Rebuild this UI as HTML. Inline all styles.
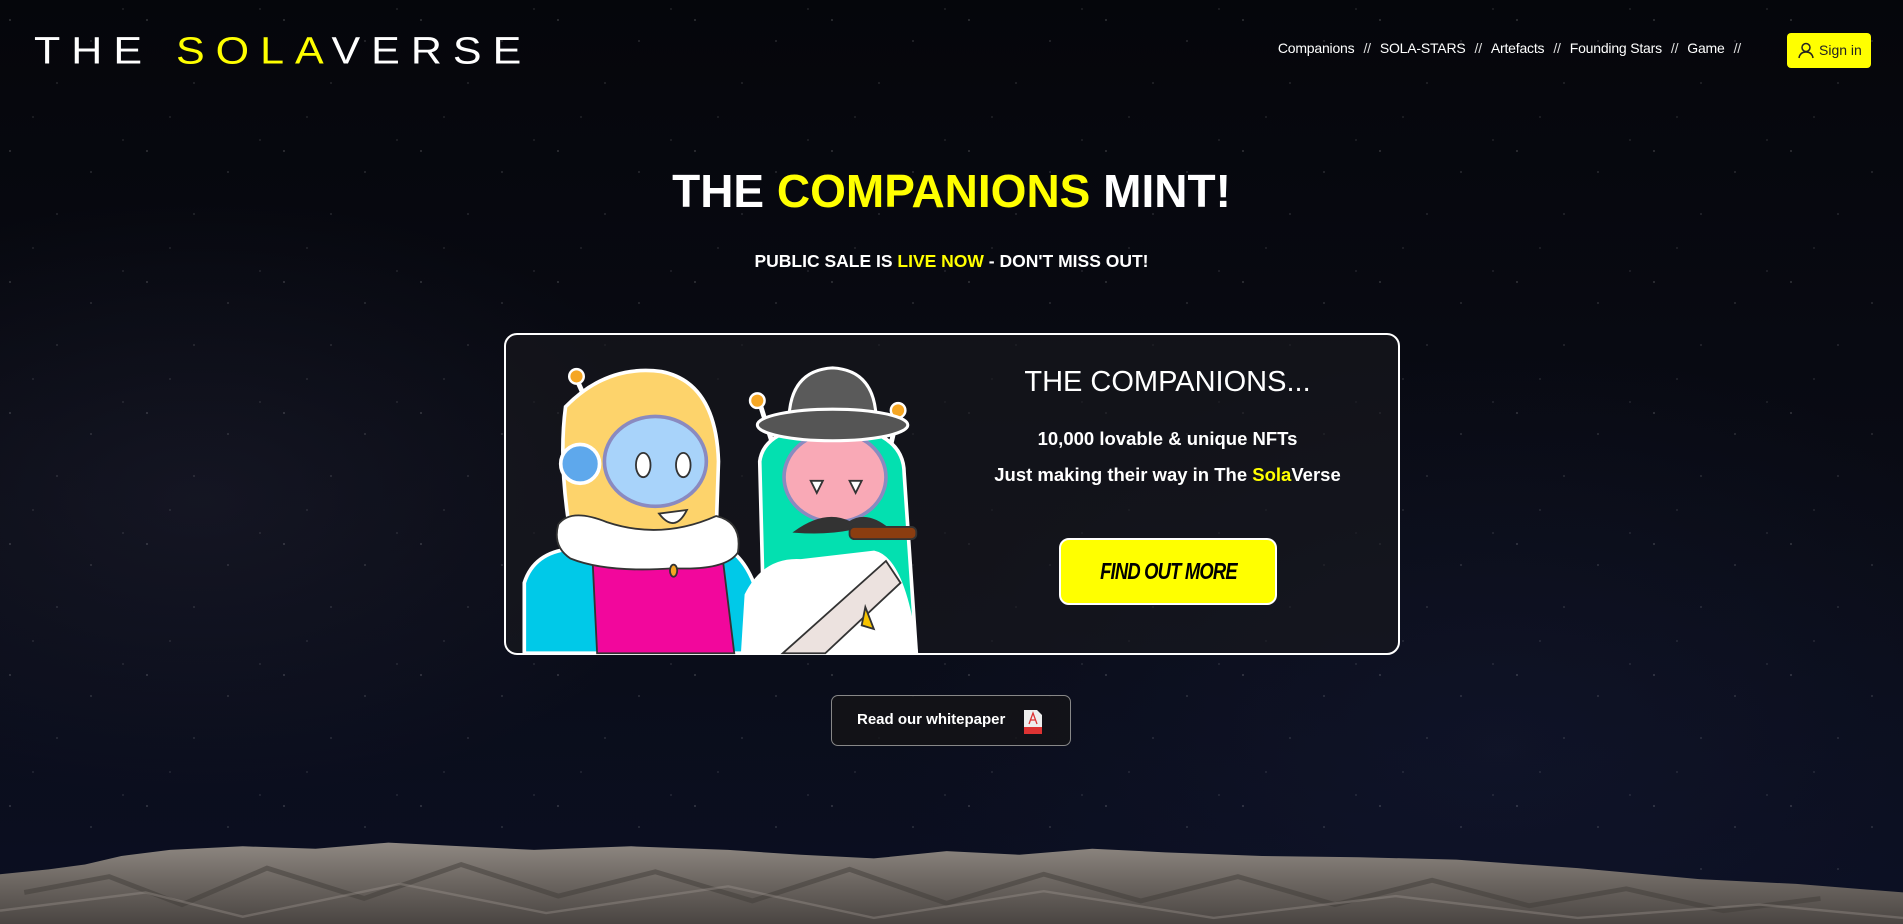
<!DOCTYPE html>
<html><head><meta charset="utf-8"><style>
*{margin:0;padding:0;box-sizing:border-box}
html,body{width:1903px;height:924px;overflow:hidden}
body{position:relative;font-family:"Liberation Sans",sans-serif;color:#fff;
background:
radial-gradient(ellipse 500px 300px at 200px 500px,rgba(40,40,60,.35),transparent),
radial-gradient(ellipse 600px 400px at 1500px 750px,rgba(20,25,50,.5),transparent),
linear-gradient(#05060b,#0a0c16 60%,#0b0f22);}
.stars{position:absolute;inset:0;
background-image:radial-gradient(1px 1px at 10px 20px,rgba(255,255,255,.5),transparent),
radial-gradient(1px 1px at 57px 83px,rgba(255,255,255,.35),transparent),
radial-gradient(1px 1px at 91px 41px,rgba(255,255,255,.4),transparent),
radial-gradient(1px 1px at 33px 117px,rgba(255,255,255,.3),transparent),
radial-gradient(1px 1px at 123px 9px,rgba(255,255,255,.3),transparent);
background-size:137px 131px}
.logo{position:absolute;left:34px;top:26px;font-size:43px;letter-spacing:11px;font-weight:normal;white-space:nowrap;line-height:50px;transform:scaleY(.88)}
.y{color:#ffff00}
.nav{position:absolute;top:40px;right:153px;font-size:14px;white-space:nowrap;letter-spacing:-.2px}
.nav span.s{margin:0 9px;color:#ddd}
.sign{position:absolute;left:1787px;top:33px;width:84px;height:35px;background:#ffff00;border-radius:4px;color:#222;font-size:14px;line-height:35px;padding-left:32px}
.sign svg{position:absolute;left:11px;top:9px}
h1{position:absolute;left:0;width:1903px;top:164px;text-align:center;font-size:46px;font-weight:bold}
.sub{position:absolute;left:0;width:1903px;top:251px;text-align:center;font-size:17.5px;font-weight:bold}
.card{position:absolute;left:504px;top:333px;width:896px;height:322px;border:2px solid #fff;border-radius:13px;background:rgba(25,25,30,.6)}
.ct{position:absolute;left:1000px;width:335px;text-align:center;top:366px;font-size:29px}
.l1{position:absolute;left:960px;width:415px;text-align:center;top:428px;font-size:18.5px;font-weight:bold}
.l2{position:absolute;left:960px;width:415px;text-align:center;top:464px;font-size:18.5px;font-weight:bold}
.btn{position:absolute;left:1059px;top:538px;width:218px;height:67px;background:#ffff00;border:2px solid #fff;border-radius:10px;color:#000;font-size:23px;font-weight:bold;font-style:italic;text-align:center;line-height:63px;letter-spacing:-1px}
.btn span{display:inline-block;transform:scaleX(.8)}
.wp{position:absolute;left:831px;top:695px;width:240px;height:51px;border:1.5px solid #888;border-radius:7px;background:rgba(20,20,22,.8);font-size:15px;font-weight:bold;line-height:48px;padding-left:25px}
.wp svg{position:absolute;left:192px;top:14px}
svg.over{position:absolute;left:0;top:0}
</style></head><body>
<div class="stars"></div>
<svg class="over" width="1903" height="924" viewBox="0 0 1568 761" preserveAspectRatio="none">
<defs><linearGradient id="m" x1="0" y1="0" x2="0" y2="1"><stop offset="0" stop-color="#8f8882"/><stop offset=".5" stop-color="#6b6560"/><stop offset="1" stop-color="#4a4542"/></linearGradient></defs>
<path d="M0 720 L40 716 L70 712 L100 705 L140 700 L200 697 L260 699 L320 694 L380 697 L440 700 L520 697 L600 700 L660 704 L720 707 L780 701 L840 704 L900 699 L960 702 L1040 705 L1120 706 L1200 708 L1300 715 L1400 724 L1480 728 L1568 735 L1568 761 L0 761Z" fill="url(#m)"/>
<path d="M20 735 L90 722 L150 745 L220 715 L300 740 L380 712 L460 738 L540 718 L620 742 L700 716 L780 744 L860 720 L940 742 L1020 722 L1100 745 L1180 725 L1260 746 L1340 732 L1420 750 L1500 740" stroke="#3f3b38" stroke-width="4" fill="none" opacity=".5"/>
<path d="M0 750 L120 735 L200 755 L330 728 L450 752 L600 730 L720 756 L860 734 L1000 756 L1150 738 L1300 756 L1450 745 L1568 756" stroke="#a39b94" stroke-width="2" fill="none" opacity=".35"/>
</svg>
<div class="logo">THE <span class="y">SOLA</span>VERSE</div>
<div class="nav">Companions<span class="s">//</span>SOLA-STARS<span class="s">//</span>Artefacts<span class="s">//</span>Founding Stars<span class="s">//</span>Game<span class="s">//</span></div>
<div class="sign"><svg width="16" height="17" viewBox="0 0 16 17"><circle cx="8" cy="5.5" r="4" fill="none" stroke="#222" stroke-width="1.5"/><path d="M1 16 Q2 10 8 10 Q14 10 15 16" fill="none" stroke="#222" stroke-width="1.5"/></svg>Sign in</div>
<h1>THE <span class="y">COMPANIONS</span> MINT!</h1>
<div class="sub">PUBLIC SALE IS <span class="y">LIVE NOW</span> - DON'T MISS OUT!</div>
<div class="card"></div>
<svg class="over" width="1903" height="924" viewBox="0 0 1568 761" preserveAspectRatio="none" style="pointer-events:none">
<g stroke="#333" stroke-width="1.5">
<line x1="475" y1="312" x2="492" y2="350" stroke="#fff" stroke-width="4"/>
<circle cx="475" cy="310" r="6" fill="#f5a623" stroke="#fff" stroke-width="2"/>
<path d="M432 538 L432 480 Q440 455 470 452 L600 452 Q628 470 632 538Z" fill="#00c9e8" stroke="#fff" stroke-width="3"/>
<path d="M488 456 L595 456 L605 538 L492 538Z" fill="#f2079c"/>
<line x1="626" y1="332" x2="638" y2="370" stroke="#fff" stroke-width="4"/>
<circle cx="624" cy="330" r="6" fill="#f5a623" stroke="#fff" stroke-width="2"/>
<line x1="740" y1="340" x2="732" y2="375" stroke="#fff" stroke-width="4"/>
<circle cx="740" cy="338" r="6" fill="#f5a623" stroke="#fff" stroke-width="2"/>
<path d="M630 538 L626 380 Q630 350 690 350 Q745 355 745 390 L755 538Z" fill="#03e0b0" stroke="#fff" stroke-width="3"/>
<path d="M615 490 Q630 460 660 462 L720 455 Q745 460 755 538 L612 538Z" fill="#fff" stroke="#fff" stroke-width="3"/>
<path d="M645 538 L730 462 L742 480 L680 538Z" fill="#ece2df"/>
<path d="M713 500 L720 518 L710 515Z" fill="#f8c400"/>
<ellipse cx="688" cy="393" rx="42" ry="37" fill="#f9a9b6" stroke="#8a8ac0" stroke-width="3"/>
<path d="M668 396 L678 396 L673 406Z M700 396 L710 396 L705 406Z" fill="#fff"/>
<path d="M655 438 Q680 420 700 430 Q715 420 735 438 Q710 440 700 436 Q680 440 655 438Z" fill="#333"/>
<rect x="700" y="434" width="55" height="10" rx="4" fill="#8b3d10"/>
<path d="M650 348 Q650 305 686 303 Q722 305 722 348Z" fill="#5a5a5a" stroke="#fff" stroke-width="2.5"/>
<ellipse cx="686" cy="350" rx="62" ry="13" fill="#555" stroke="#fff" stroke-width="2.5"/>
<path d="M466 335 Q500 300 545 306 Q590 315 592 380 L590 440 Q560 460 500 455 L470 440 Q460 380 466 335Z" fill="#fdd36b" stroke="#fff" stroke-width="3"/>
<ellipse cx="540" cy="380" rx="42" ry="37" fill="#a8d3fa" stroke="#8a8ac0" stroke-width="3"/>
<ellipse cx="530" cy="383" rx="6" ry="10" fill="#fff"/><ellipse cx="563" cy="383" rx="6" ry="10" fill="#fff"/>
<path d="M543 423 Q556 440 566 420Z" fill="#fff"/>
<circle cx="478" cy="382" r="16" fill="#5ea8ec" stroke="#fff" stroke-width="3"/>
<path d="M460 432 Q470 418 500 430 Q545 445 590 425 Q612 430 608 455 Q598 470 555 468 Q500 472 470 460 Q455 450 460 432Z" fill="#fff"/>
<ellipse cx="555" cy="470" rx="3" ry="5" fill="#f5a623"/>
</g></svg>
<div class="ct">THE COMPANIONS...</div>
<div class="l1">10,000 lovable &amp; unique NFTs</div>
<div class="l2">Just making their way in The <span class="y">Sola</span>Verse</div>
<div class="btn"><span>FIND OUT MORE</span></div>
<div class="wp">Read our whitepaper<svg width="18" height="24" viewBox="0 0 18 24"><path d="M0 0 H13 L18 5 V24 H0Z" fill="#eee"/><rect x="0" y="17" width="18" height="7" fill="#d33"/><path d="M5 14 L9 3 L13 14 M7 10 H11" stroke="#d33" stroke-width="1.3" fill="none"/></svg></div>
</body></html>
